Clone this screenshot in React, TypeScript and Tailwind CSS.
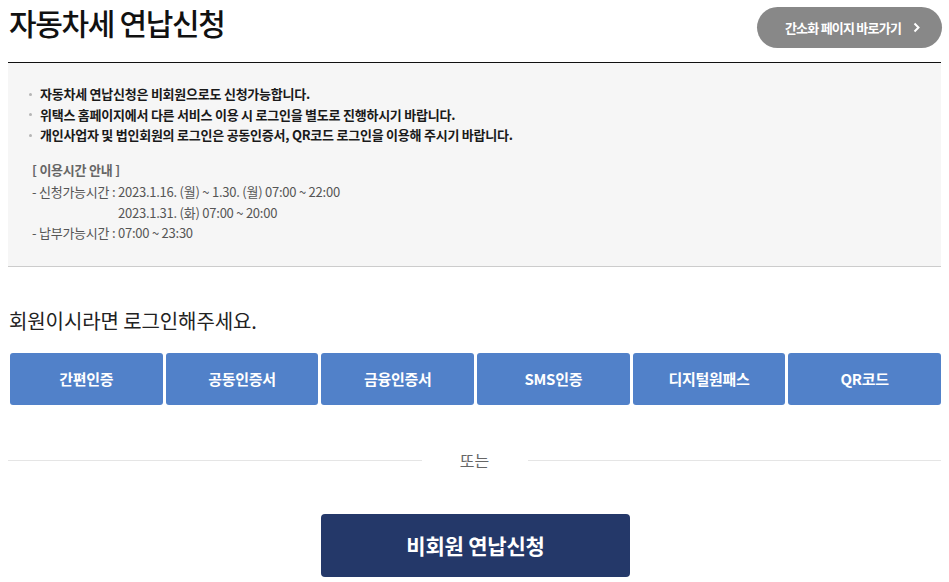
import React from 'react';

const authButtons = ['간편인증', '공동인증서', '금융인증서', 'SMS인증', '디지털원패스', 'QR코드'];

const notices = [
  '자동차세 연납신청은 비회원으로도 신청가능합니다.',
  '위택스 홈페이지에서 다른 서비스 이용 시 로그인을 별도로 진행하시기 바랍니다.',
  '개인사업자 및 법인회원의 로그인은 공동인증서, QR코드 로그인을 이용해 주시기 바랍니다.',
];

const App: React.FC = () => {
  return (
    <div
      className="w-[949px] h-[582px] bg-white overflow-hidden"
      style={{ fontFamily: '"Noto Sans CJK KR", "Noto Sans", sans-serif' }}
    >
      {/* Header */}
      <div className="flex items-start justify-between pl-[9px] pr-[7px] pt-[3px] h-[62px]">
        <h1 className="text-[30px] leading-[38px] font-medium text-[#111] tracking-[-0.045em]">자동차세 연납신청</h1>
        <button className="mt-[4px] h-[41px] w-[185px] rounded-full bg-[#888888] text-white text-[13px] font-bold tracking-[-0.06em] flex items-center justify-center gap-[12px] pl-[6px]">
          간소화 페이지 바로가기
          <svg width="7" height="11" viewBox="0 0 7 11" fill="none">
            <path d="M1.5 1.5 L5.5 5.5 L1.5 9.5" stroke="white" strokeWidth="2" />
          </svg>
        </button>
      </div>

      {/* Notice box */}
      <div className="mx-[8px] border-t border-[#111] border-b border-b-[#cccccc] bg-[#f6f6f6] h-[205px] pt-[21px] pl-[21px] tracking-[-0.015em]">
        <ul className="flex flex-col">
          {notices.map((n) => (
            <li key={n} className="flex items-center text-[13px] leading-[20.5px] font-bold text-[#1a1a1a]">
              <span className="w-[3px] h-[3px] rounded-full bg-[#b5b5b5] mr-[8px]" />
              {n}
            </li>
          ))}
        </ul>
        <div className="mt-[14px] pl-[3px] text-[13px] leading-[20.5px] text-[#555]">
          <p className="font-bold text-[#666] mb-[2px]">[ 이용시간 안내 ]</p>
          <div className="flex">
            <span className="whitespace-pre">- 신청가능시간 : </span>
            <div className="flex flex-col">
              <span>2023.1.16. (월) ~ 1.30. (월) 07:00 ~ 22:00</span>
              <span>2023.1.31. (화) 07:00 ~ 20:00</span>
            </div>
          </div>
          <p>- 납부가능시간 : 07:00 ~ 23:30</p>
        </div>
      </div>

      {/* Login */}
      <p className="mt-[40px] pl-[9px] text-[20px] leading-[28px] text-[#222] tracking-[-0.005em]">회원이시라면 로그인해주세요.</p>
      <div className="mt-[18px] ml-[10px] mr-[8px] grid grid-cols-6 gap-[3px]">
        {authButtons.map((b) => (
          <button
            key={b}
            className="h-[52px] rounded-[3px] bg-[#5181c9] text-white text-[15px] font-bold tracking-[-0.02em]"
          >
            {b}
          </button>
        ))}
      </div>

      {/* Divider */}
      <div className="mt-[43px] mx-[8px] flex items-center">
        <div className="flex-1 h-px bg-[#e5e5e5]" />
        <span className="w-[106px] text-center text-[16px] leading-[24px] text-[#666]">또는</span>
        <div className="flex-1 h-px bg-[#e5e5e5]" />
      </div>

      <div className="mt-[42px] flex justify-center pl-[2px]">
        <button className="w-[309px] h-[63px] rounded-[4px] bg-[#243869] text-white text-[21px] font-bold tracking-[-0.01em]">
          비회원 연납신청
        </button>
      </div>
    </div>
  );
};

export default App;
